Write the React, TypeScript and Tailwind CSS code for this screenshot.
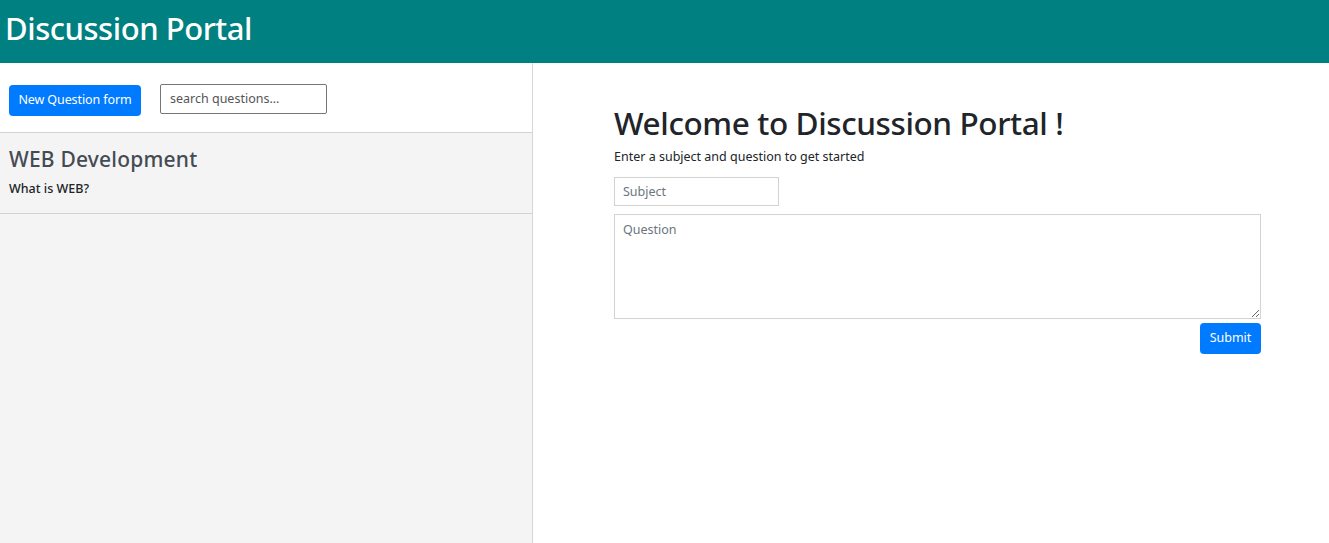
export default function App() {
  return (
    <div className="w-[1329px] h-[543px] flex flex-col bg-white overflow-hidden font-['Noto_Sans',sans-serif] text-[#212529]">
      {/* header */}
      <header className="h-[63px] bg-[#008080] flex items-center px-[5px]">
        <h1 className="text-[31px] font-medium text-white tracking-[-0.45px] mt-[-6px]">Discussion Portal</h1>
      </header>

      <div className="flex flex-1">
        {/* left column */}
        <aside className="w-[533px] border-r border-[#d6d6d6] bg-[#f4f4f4] flex flex-col">
          <div className="h-[70px] bg-white border-b border-[#d3d3d3] flex items-center gap-[19px] pl-[9px] pt-[2px]">
            <button className="h-[31px] w-[132px] rounded-[4px] bg-[#007bff] text-white text-[12.5px] mt-[4px] tracking-[-0.1px]">
              New Question form
            </button>
            <input
              className="w-[167px] h-[30px] border border-[#767676] rounded-[2px] px-[9px] text-[12.5px] bg-white outline-none placeholder:text-[#555]"
              placeholder="search questions..."
            />
          </div>
          <div className="h-[81px] border-b border-[#d3d3d3] px-[9px] pt-[12px]">
            <h3 className="text-[21px] leading-[28px] font-medium text-[#454b52] tracking-[0.2px]">WEB Development</h3>
            <p className="text-[12.5px] font-medium text-[#212529] mt-[7px]">What is WEB?</p>
          </div>
        </aside>

        {/* right column */}
        <main className="flex-1 pl-[81px] pr-[68px] pt-[40px]">
          <h2 className="text-[31.5px] leading-[40px] font-medium tracking-[-0.4px]">Welcome to Discussion Portal !</h2>
          <p className="text-[12.5px] mt-[5px]">Enter a subject and question to get started</p>
          <input
            className="block mt-[10px] w-[165px] h-[29px] border border-[#d3d3d3] px-[8px] text-[12.5px] outline-none placeholder:text-[#6c757d]"
            placeholder="Subject"
          />
          <textarea
            className="block mt-[8px] w-full h-[105px] border border-[#d3d3d3] px-[8px] py-[6px] text-[12.5px] outline-none placeholder:text-[#6c757d]"
            placeholder="Question"
          />
          <div className="flex justify-end mt-[4px]">
            <button className="h-[31px] w-[61px] rounded-[4px] bg-[#007bff] text-white text-[12.5px]">Submit</button>
          </div>
        </main>
      </div>
    </div>
  );
}
